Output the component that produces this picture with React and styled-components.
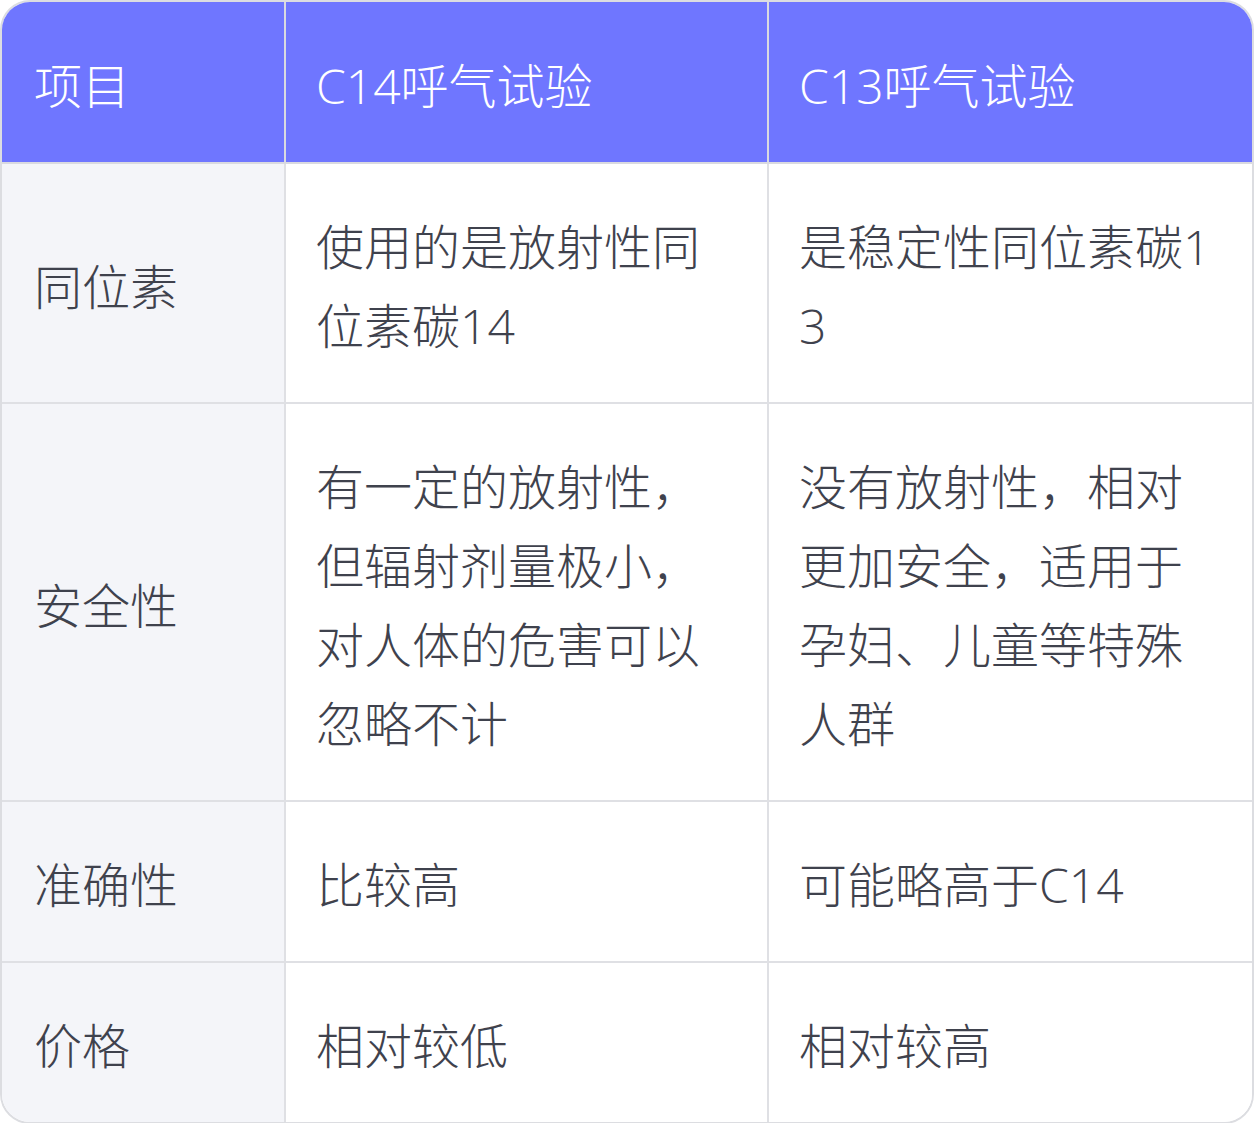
import styled, { createGlobalStyle } from "styled-components";

const GlobalStyle = createGlobalStyle`
  html, body {
    margin: 0;
    padding: 0;
    background: #ffffff;
  }
`;

const Frame = styled.div`
  width: 1254px;
  box-sizing: border-box;
  border: 2px solid #dcdde1;
  border-radius: 30px;
  overflow: hidden;
  font-family: "Open Sans", "Noto Sans CJK SC", sans-serif;
  font-weight: 300;
`;

const Table = styled.table`
  width: 100%;
  border-collapse: collapse;
  table-layout: fixed;
`;

const Col = styled.col`
  width: ${(p) => p.$width || "auto"};
`;

const HeadCell = styled.th`
  background: #6f76ff;
  color: #ffffff;
  font-weight: 300;
  font-size: 48px;
  line-height: 80px;
  text-align: left;
  padding: 44px 30px 36px ${(p) => (p.$first ? "32px" : "30px")};
  border-left: ${(p) => (p.$first ? "none" : "2px solid #d9dae0")};
  border-bottom: 2px solid #d9dae0;
  white-space: nowrap;
`;

const Cell = styled.td`
  background: ${(p) => (p.$label ? "#f4f5f9" : "#ffffff")};
  color: #3f424d;
  font-size: 48px;
  line-height: 79px;
  padding: ${(p) => (p.$label ? "43px 30px 37px 32px" : "43px 30px 37px")};
  vertical-align: middle;
  word-break: break-all;
  border-left: ${(p) => (p.$label ? "none" : "2px solid #dfe0e4")};
  border-top: 2px solid #dfe0e4;
`;

const rows = [
  ["同位素", "使用的是放射性同位素碳14", "是稳定性同位素碳13"],
  [
    "安全性",
    "有一定的放射性，但辐射剂量极小，对人体的危害可以忽略不计",
    "没有放射性，相对更加安全，适用于孕妇、儿童等特殊人群",
  ],
  ["准确性", "比较高", "可能略高于C14"],
  ["价格", "相对较低", "相对较高"],
];

export default function App() {
  return (
    <>
      <GlobalStyle />
      <Frame>
        <Table>
          <colgroup>
            <Col $width="283px" />
            <Col $width="483px" />
            <Col />
          </colgroup>
          <thead>
            <tr>
              <HeadCell $first>项目</HeadCell>
              <HeadCell>C14呼气试验</HeadCell>
              <HeadCell>C13呼气试验</HeadCell>
            </tr>
          </thead>
          <tbody>
            {rows.map((r) => (
              <tr key={r[0]}>
                <Cell $label>{r[0]}</Cell>
                <Cell>{r[1]}</Cell>
                <Cell>{r[2]}</Cell>
              </tr>
            ))}
          </tbody>
        </Table>
      </Frame>
    </>
  );
}
